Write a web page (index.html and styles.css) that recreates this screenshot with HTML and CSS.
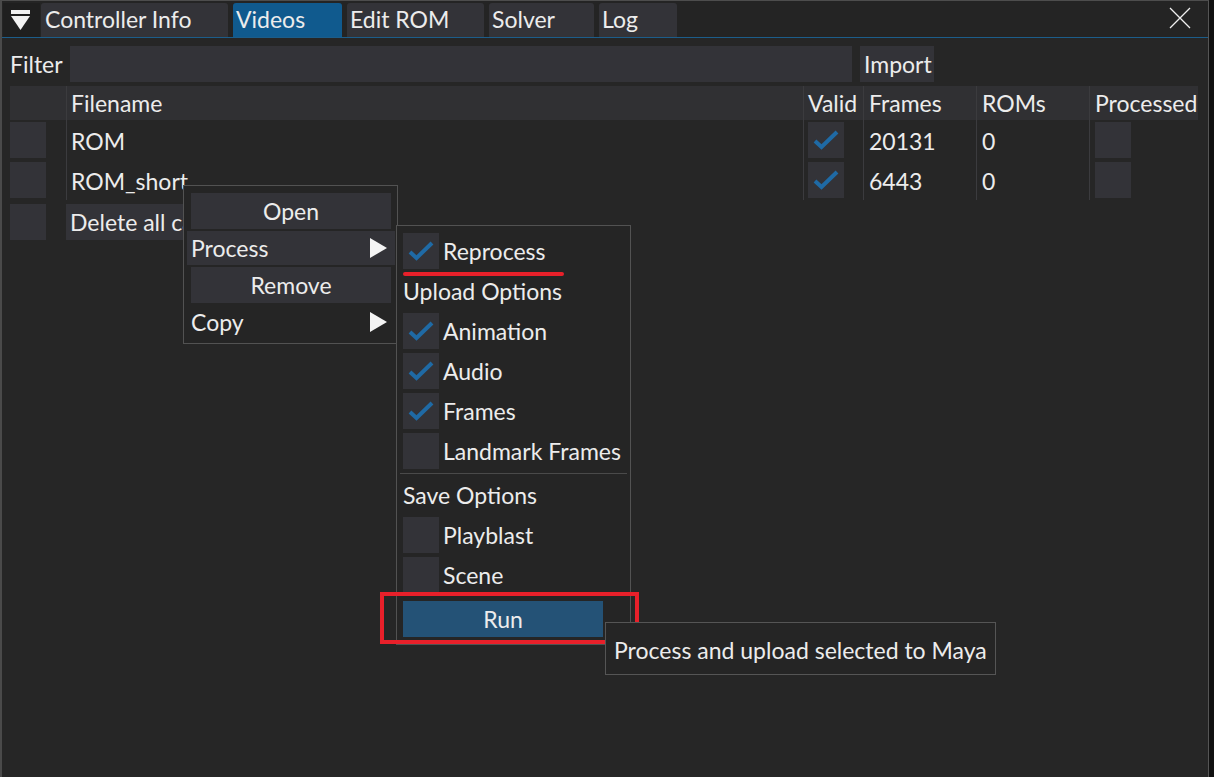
FILE: index.html
```html
<!DOCTYPE html>
<html>
<head>
<meta charset="utf-8">
<link rel="stylesheet" href="styles.css">
</head>
<body>
<div class="window">
  <div class="tabbar">
    <div class="menu-btn">
      <svg width="20" height="21" viewBox="0 0 20 21"><rect x="0" y="0" width="19" height="4" fill="#f2f2f2"/><polygon points="0,6 19,6 9.5,20" fill="#f2f2f2"/></svg>
    </div>
    <div class="tab tab-ci">Controller Info</div>
    <div class="tab tab-vid active">Videos</div>
    <div class="tab tab-edit">Edit ROM</div>
    <div class="tab tab-solver">Solver</div>
    <div class="tab tab-log">Log</div>
    <div class="tab-spacer"></div>
    <div class="close-btn">
      <svg width="22" height="22" viewBox="0 0 22 22"><path d="M1 1 L21 21 M21 1 L1 21" stroke="#f0f0f0" stroke-width="1.3"/></svg>
    </div>
  </div>

  <div class="content">
    <div class="filter-row">
      <span class="label">Filter</span>
      <div class="input"></div>
      <div class="btn import">Import</div>
    </div>

    <div class="table">
      <div class="cell head c0"></div>
      <div class="cell head c1">Filename</div>
      <div class="cell head c2">Valid</div>
      <div class="cell head c3">Frames</div>
      <div class="cell head c4">ROMs</div>
      <div class="cell head c5">Processed</div>

      <div class="cell c0"><div class="box"></div></div>
      <div class="cell c1 sep">ROM</div>
      <div class="cell c2 sep"><div class="box checked"><svg width="36" height="36" viewBox="0 0 36 36"><path d="M7 19 L13.5 25 L29 10" fill="none" stroke="#1f6aa5" stroke-width="4"/></svg></div></div>
      <div class="cell c3 sep">20131</div>
      <div class="cell c4 sep">0</div>
      <div class="cell c5 sep"><div class="box"></div></div>

      <div class="cell c0"><div class="box"></div></div>
      <div class="cell c1 sep">ROM_short</div>
      <div class="cell c2 sep"><div class="box checked"><svg width="36" height="36" viewBox="0 0 36 36"><path d="M7 19 L13.5 25 L29 10" fill="none" stroke="#1f6aa5" stroke-width="4"/></svg></div></div>
      <div class="cell c3 sep">6443</div>
      <div class="cell c4 sep">0</div>
      <div class="cell c5 sep"><div class="box"></div></div>
    </div>

    <div class="delete-row">
      <div class="box"></div>
      <div class="btn delete">Delete all cached data</div>
    </div>
  </div>

  <div class="ctx-menu">
    <div class="mbtn">Open</div>
    <div class="mrow hover"><span>Process</span><span class="arrow"></span></div>
    <div class="mbtn">Remove</div>
    <div class="mrow"><span>Copy</span><span class="arrow"></span></div>
  </div>

  <div class="sub-menu">
    <div class="check-row"><div class="box checked"><svg width="36" height="36" viewBox="0 0 36 36"><path d="M7 19 L13.5 25 L29 10" fill="none" stroke="#1f6aa5" stroke-width="4"/></svg></div><span>Reprocess</span></div>
    <div class="text-row">Upload Options</div>
    <div class="check-row"><div class="box checked"><svg width="36" height="36" viewBox="0 0 36 36"><path d="M7 19 L13.5 25 L29 10" fill="none" stroke="#1f6aa5" stroke-width="4"/></svg></div><span>Animation</span></div>
    <div class="check-row"><div class="box checked"><svg width="36" height="36" viewBox="0 0 36 36"><path d="M7 19 L13.5 25 L29 10" fill="none" stroke="#1f6aa5" stroke-width="4"/></svg></div><span>Audio</span></div>
    <div class="check-row"><div class="box checked"><svg width="36" height="36" viewBox="0 0 36 36"><path d="M7 19 L13.5 25 L29 10" fill="none" stroke="#1f6aa5" stroke-width="4"/></svg></div><span>Frames</span></div>
    <div class="check-row"><div class="box"></div><span>Landmark Frames</span></div>
    <div class="separator"></div>
    <div class="text-row">Save Options</div>
    <div class="check-row"><div class="box"></div><span>Playblast</span></div>
    <div class="check-row"><div class="box"></div><span>Scene</span></div>
    <div class="run-btn">Run</div>
  </div>

  <div class="red-underline"></div>
  <div class="red-rect"></div>

  <div class="tooltip">Process and upload selected to Maya</div>
</div>
</body>
</html>
```

FILE: styles.css
```css
* { box-sizing: border-box; }
html, body {
  margin: 0;
  padding: 0;
  background: #111;
}
body {
  font-family: Lato, "Noto Sans", sans-serif;
  font-size: 23px;
  color: #ececec;
  width: 1214px;
  height: 777px;
  overflow: hidden;
}
.window {
  position: relative;
  width: 1209px;
  height: 777px;
  background: #262626;
  border-top: 1px solid #4d4d4d;
  border-left: 2px solid #4a4a4a;
  border-right: 1px solid #555;
}
.tabbar {
  display: flex;
  align-items: flex-end;
  height: 37px;
  padding: 2px 0 0 1px;
  background: #242424;
  border-bottom: 1px solid #1c5d8a;
}
.menu-btn {
  width: 37px;
  height: 34px;
  background: #1f1f1f;
  display: flex;
  align-items: center;
  justify-content: center;
  padding-right: 2px;
}
.tab {
  height: 34px;
  background: #333338;
  border-radius: 3px 3px 0 0;
  padding: 3px 0 0 4px;
  line-height: 26px;
  margin-left: 5px;
  white-space: nowrap;
}
.tab-ci { width: 187px; margin-left: 1px; }
.tab-vid { width: 109px; padding-left: 3px; }
.tab-edit { width: 137px; padding-left: 3px; }
.tab-solver { width: 105px; padding-left: 3px; }
.tab-log { width: 78px; padding-left: 3px; }
.tab.active { background: #105a8e; }
.tab-spacer { flex: 1; }
.close-btn {
  width: 40px;
  height: 34px;
  display: flex;
  align-items: center;
  justify-content: center;
  margin-right: 8px;
  padding-bottom: 4px;
}

.content {
  padding: 8px 0 0 8px;
}
.filter-row {
  display: flex;
  align-items: center;
  height: 36px;
}
.label {
  width: 60px;
  padding-left: 0;
}
.input {
  width: 782px;
  height: 36px;
  background: #333338;
}
.btn {
  height: 36px;
  background: #333338;
  line-height: 36px;
  padding: 0 4px;
}
.import {
  margin-left: 8px;
  width: 74px;
}

.table {
  margin-top: 4px;
  display: grid;
  grid-template-columns: 56px 737px 60px 113px 113px 109px;
  grid-template-rows: 34px 40px 40px;
  width: 1188px;
}
.cell {
  display: flex;
  align-items: center;
  white-space: nowrap;
  padding-left: 4px;
}
.cell.head {
  background: #303033;
}
.cell.c0 { padding-left: 0; }
.cell.c2 { padding-left: 4px; }
.cell.c3 { padding-left: 5px; }
.cell.c4 { padding-left: 5px; }
.cell.c5 { padding-left: 5px; }
.cell.head.c2 { padding-left: 4px; }
.cell.head.c3, .cell.head.c4, .cell.head.c5 { padding-left: 5px; }
.cell.sep, .cell.head.c1 { border-left: 1px solid #3b3b3e; }
.cell.head.c2, .cell.head.c3, .cell.head.c4, .cell.head.c5 { border-left: 1px solid #3b3b3e; }
.cell:not(.head) { padding-top: 2px; align-items: flex-start; }
.cell:not(.head).c1, .cell:not(.head).c3, .cell:not(.head).c4 { align-items: center; }

.box {
  width: 36px;
  height: 36px;
  background: #333338;
  flex: none;
}
.box svg { display: block; }

.delete-row {
  display: flex;
  gap: 20px;
  margin-top: 4px;
}
.delete {
  padding-left: 4px;
  width: 200px;
  white-space: nowrap;
}

.ctx-menu {
  position: absolute;
  left: 181px;
  top: 184px;
  width: 215px;
  height: 159px;
  background: #252525;
  border: 1px solid #525252;
  padding: 7px 6px 0 3px;
  display: flex;
  flex-direction: column;
}
.mbtn {
  height: 36px;
  margin-left: 4px;
  width: 200px;
  background: #333338;
  text-align: center;
  line-height: 36px;
}
.mrow {
  height: 34px;
  margin: 2px 0 2px 0;
  width: 208px;
  display: flex;
  align-items: center;
  justify-content: space-between;
  padding: 0 8px 0 4px;
}
.mrow.hover { background: #333338; }
.arrow {
  width: 0;
  height: 0;
  border-top: 10px solid transparent;
  border-bottom: 10px solid transparent;
  border-left: 17px solid #f4f4f4;
}

.sub-menu {
  position: absolute;
  left: 394px;
  top: 224px;
  width: 235px;
  height: 420px;
  background: #252525;
  border: 1px solid #525252;
  padding: 7px 0 0 6px;
  display: flex;
  flex-direction: column;
}
.check-row {
  display: flex;
  align-items: center;
  gap: 4px;
  height: 36px;
  margin-bottom: 4px;
  white-space: nowrap;
}
.text-row {
  height: 36px;
  line-height: 36px;
  margin-bottom: 4px;
  white-space: nowrap;
}
.separator {
  height: 1px;
  background: #4a4a4a;
  margin: 0 3px 3px -3px;
}
.run-btn {
  margin-top: 4px;
  width: 200px;
  height: 36px;
  background: #245276;
  text-align: center;
  line-height: 36px;
}

.red-underline {
  position: absolute;
  left: 401px;
  top: 271px;
  width: 161px;
  height: 4px;
  background: #e8202a;
  border-radius: 2px;
}
.red-rect {
  position: absolute;
  left: 378px;
  top: 591px;
  width: 259px;
  height: 52px;
  border: 4px solid #e8202a;
}
.tooltip {
  position: absolute;
  left: 603px;
  top: 621px;
  width: 391px;
  height: 53px;
  background: #252525;
  border: 1px solid #555;
  padding-left: 8px;
  line-height: 54px;
  white-space: nowrap;
}
```
